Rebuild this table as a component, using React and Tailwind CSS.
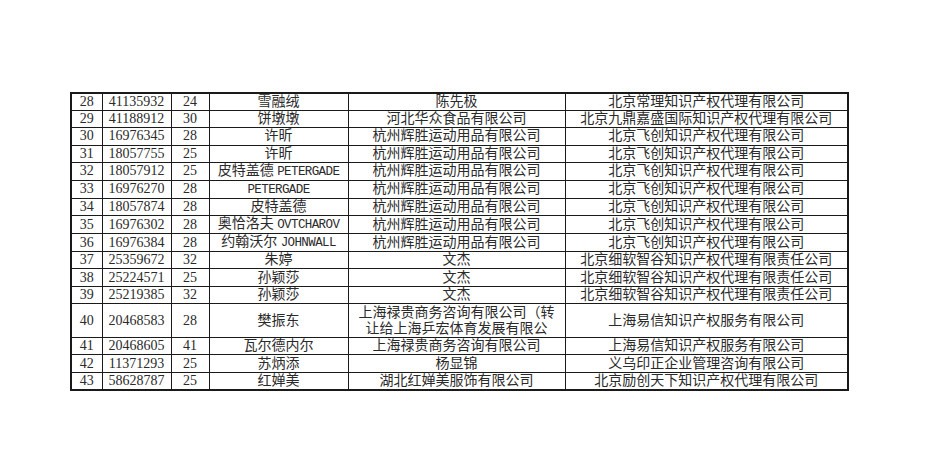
const rows = [
  ['28', '41135932', '24', '雪融绒', '陈先极', '北京常理知识产权代理有限公司'],
  ['29', '41188912', '30', '饼墩墩', '河北华众食品有限公司', '北京九鼎嘉盛国际知识产权代理有限公司'],
  ['30', '16976345', '28', '许昕', '杭州辉胜运动用品有限公司', '北京飞创知识产权代理有限公司'],
  ['31', '18057755', '25', '许昕', '杭州辉胜运动用品有限公司', '北京飞创知识产权代理有限公司'],
  ['32', '18057912', '25', ['皮特盖德', 'PETERGADE'], '杭州辉胜运动用品有限公司', '北京飞创知识产权代理有限公司'],
  ['33', '16976270', '28', ['', 'PETERGADE'], '杭州辉胜运动用品有限公司', '北京飞创知识产权代理有限公司'],
  ['34', '18057874', '28', '皮特盖德', '杭州辉胜运动用品有限公司', '北京飞创知识产权代理有限公司'],
  ['35', '16976302', '28', ['奥恰洛夫', 'OVTCHAROV'], '杭州辉胜运动用品有限公司', '北京飞创知识产权代理有限公司'],
  ['36', '16976384', '28', ['约翰沃尔', 'JOHNWALL'], '杭州辉胜运动用品有限公司', '北京飞创知识产权代理有限公司'],
  ['37', '25359672', '32', '朱婷', '文杰', '北京细软智谷知识产权代理有限责任公司'],
  ['38', '25224571', '25', '孙颖莎', '文杰', '北京细软智谷知识产权代理有限责任公司'],
  ['39', '25219385', '32', '孙颖莎', '文杰', '北京细软智谷知识产权代理有限责任公司'],
  ['40', '20468583', '28', '樊振东', ['上海禄贵商务咨询有限公司（转', '让给上海乒宏体育发展有限公'], '上海易信知识产权服务有限公司'],
  ['41', '20468605', '41', '瓦尔德内尔', '上海禄贵商务咨询有限公司', '上海易信知识产权服务有限公司'],
  ['42', '11371293', '25', '苏炳添', '杨显锦', '义乌印正企业管理咨询有限公司'],
  ['43', '58628787', '25', '红婵美', '湖北红婵美服饰有限公司', '北京励创天下知识产权代理有限公司'],
]

const cell = 'border border-[#1a1a1a] text-center align-middle p-0 overflow-hidden whitespace-nowrap'

const Name = ({ value }) => {
  if (!Array.isArray(value)) return value
  return (
    <>
      {value[0]}
      {value[0] && ' '}
      <span className="font-['Liberation_Mono','Noto_Sans_CJK_SC',monospace] text-[12.5px] tracking-[-0.6px]">{value[1]}</span>
    </>
  )
}

const App = () => {
  return (
    <div className="w-[927px] h-[463px] bg-white pl-[70px] pt-[92px] font-['Liberation_Serif','Noto_Sans_CJK_SC',serif] text-[14px] text-[#2a2a2a]">
      <table className="table-fixed border-collapse border-2 border-[#1a1a1a] w-[777px] leading-[16px]">
        <colgroup>
          <col className="w-[31px]" />
          <col className="w-[69px]" />
          <col className="w-[38px]" />
          <col className="w-[139px]" />
          <col className="w-[217px]" />
          <col className="w-[283px]" />
        </colgroup>
        <tbody>
          {rows.map((r) => {
            const tall = Array.isArray(r[4])
            return (
              <tr key={r[0]} className={tall ? 'h-[34px]' : 'h-[17.3px]'}>
                <td className={cell}>{r[0]}</td>
                <td className={cell}>{r[1]}</td>
                <td className={cell}>{r[2]}</td>
                <td className={cell}><Name value={r[3]} /></td>
                <td className={cell}>
                  {tall ? (
                    <div className="leading-[16px]">
                      {r[4][0]}
                      <br />
                      {r[4][1]}
                    </div>
                  ) : r[4]}
                </td>
                <td className={cell}>{r[5]}</td>
              </tr>
            )
          })}
        </tbody>
      </table>
    </div>
  )
}

export default App
